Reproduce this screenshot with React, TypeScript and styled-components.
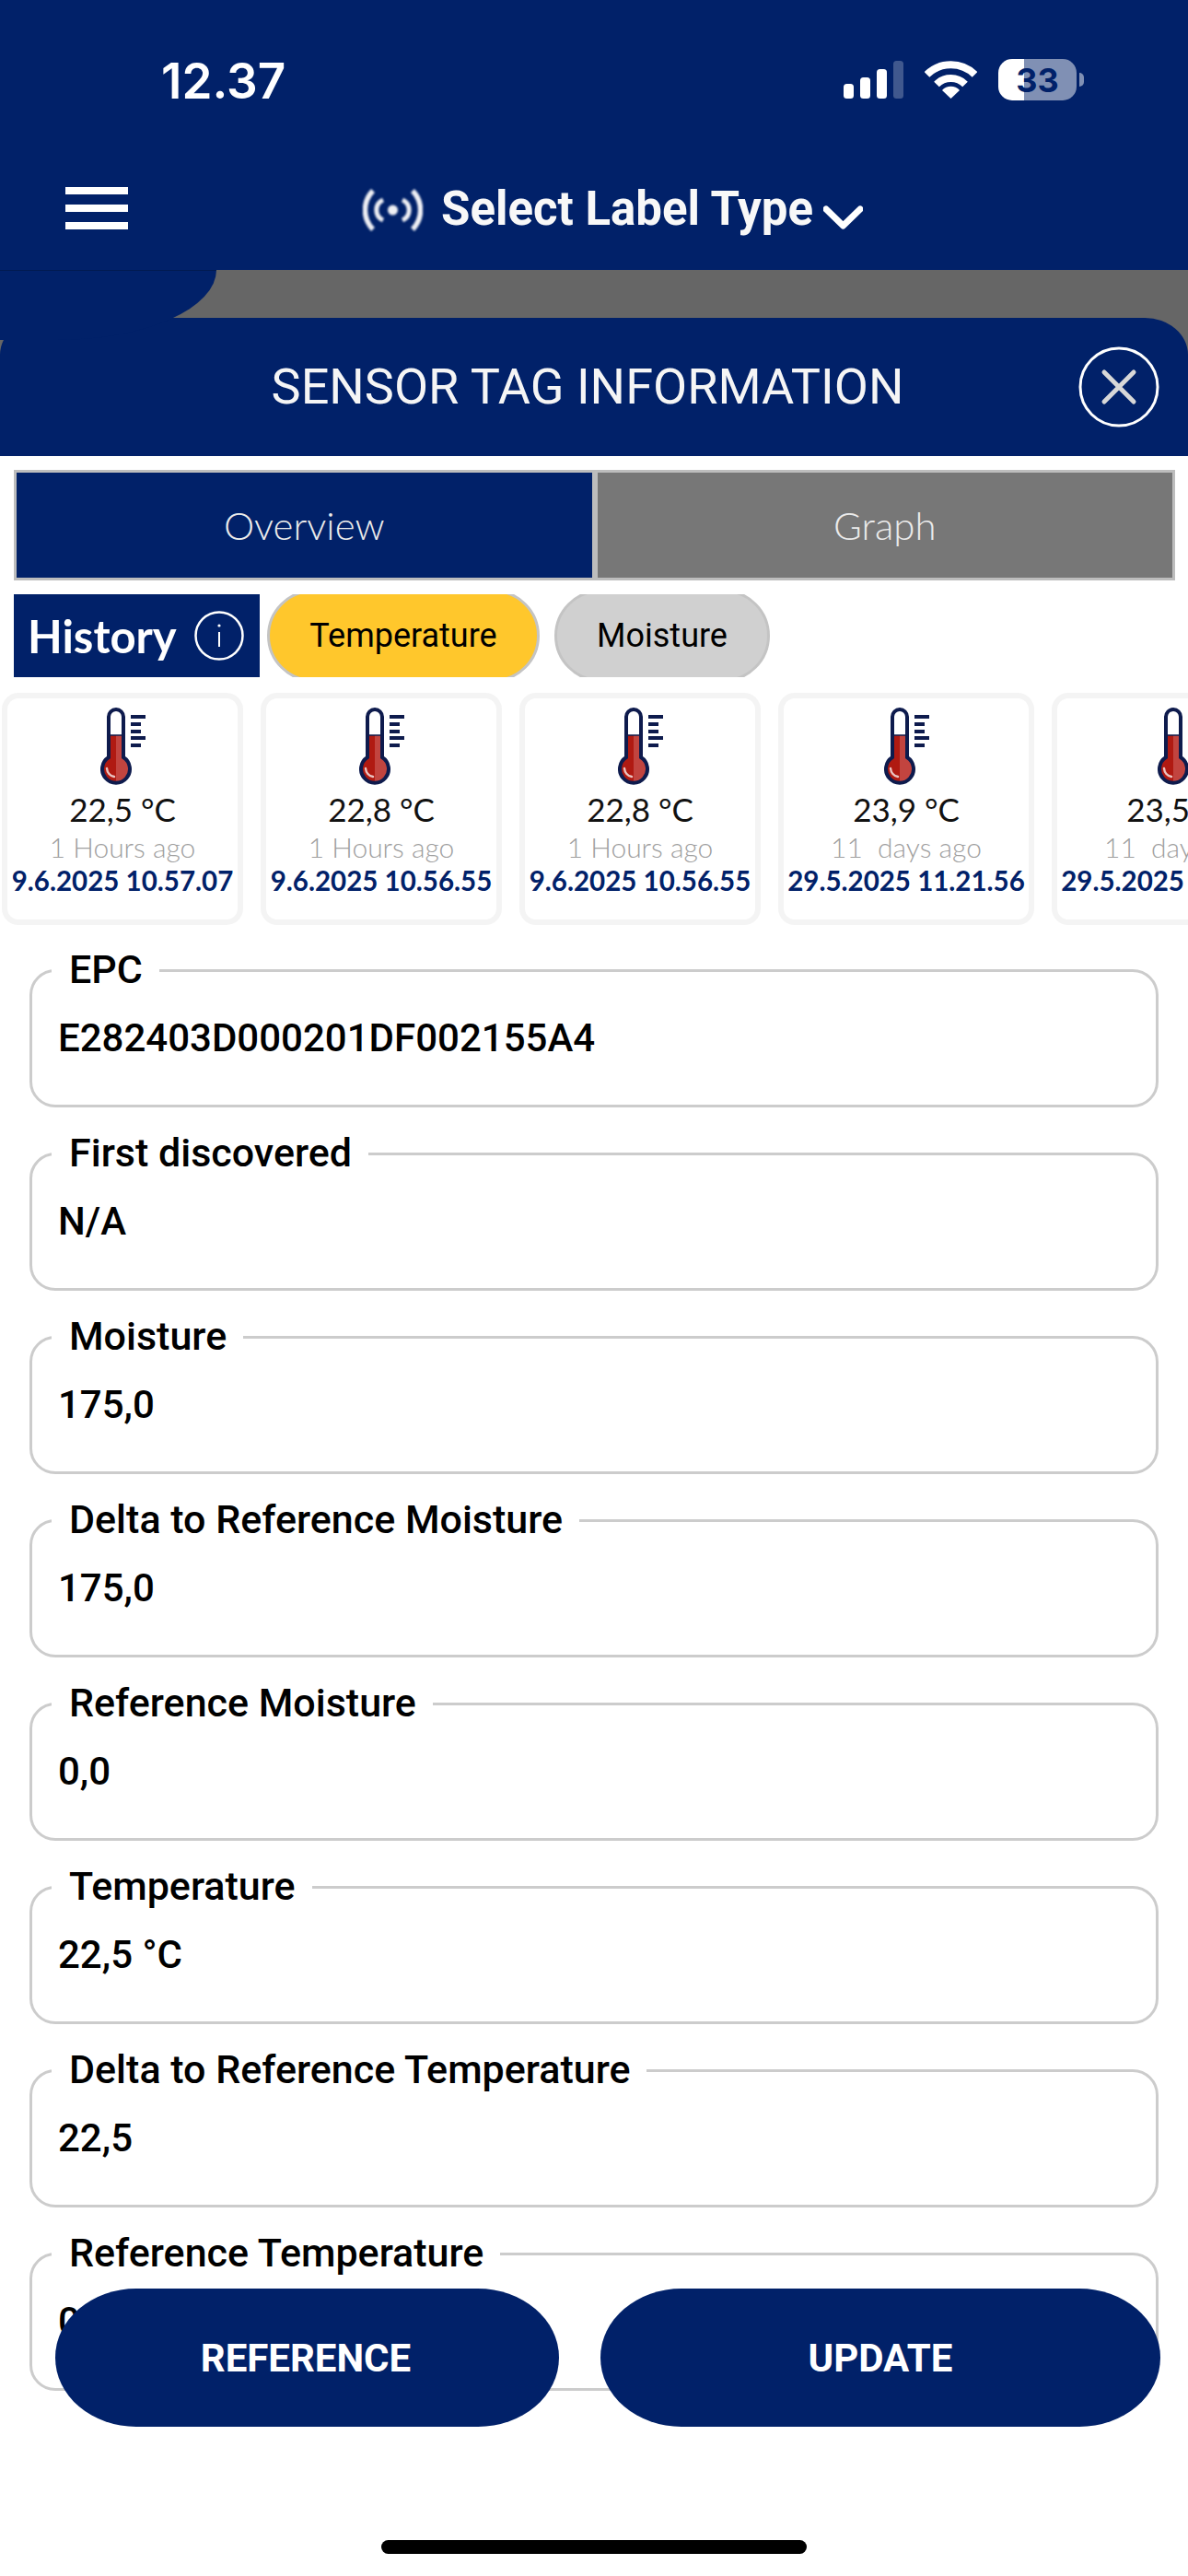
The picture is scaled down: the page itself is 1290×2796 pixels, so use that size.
import React from "react";
import styled, { createGlobalStyle } from "styled-components";

const NAVY = "#012169";

const Global = createGlobalStyle`
  html, body { margin: 0; padding: 0; background: #fff; }
  * { box-sizing: border-box; }
`;

const Page = styled.div`
  position: relative;
  width: 1290px;
  height: 2796px;
  overflow: hidden;
  background: #fff;
  display: flex;
  flex-direction: column;
  font-family: Roboto, "Liberation Sans", sans-serif;
`;

const TopBar = styled.header`
  height: 293px;
  background: ${NAVY};
  display: flex;
  flex-direction: column;
`;

const StatusRow = styled.div`
  height: 176px;
  padding: 62px 0 0 175px;
  display: flex;
  align-items: flex-start;
`;

const Clock = styled.div`
  font-family: Inter, sans-serif;
  font-weight: 600;
  font-size: 53px;
  line-height: 52px;
  color: #fff;
  width: 741px;
`;

const StatusIcons = styled.div`
  display: flex;
  align-items: flex-start;
`;

const SignalIcon = styled.svg`
  width: 65px;
  height: 41px;
  margin-top: 4px;
`;

const WifiIcon = styled.svg`
  width: 57px;
  height: 42px;
  margin: 3px 0 0 23px;
`;

const Battery = styled.div`
  position: relative;
  width: 85px;
  height: 45px;
  margin: 2px 0 0 23px;
  border-radius: 15px;
  background: linear-gradient(to right, #fff 28px, rgba(255, 255, 255, 0.5) 28px);
  display: flex;
  align-items: center;
  justify-content: center;
  font-family: Inter, sans-serif;
  font-weight: 700;
  font-size: 36px;
  color: ${NAVY};
  &::after {
    content: "";
    position: absolute;
    right: -8px;
    top: 15px;
    width: 5px;
    height: 15px;
    border-radius: 0 5px 5px 0;
    background: rgba(255, 255, 255, 0.5);
  }
`;

const NavRow = styled.nav`
  flex: 1;
  position: relative;
  display: flex;
  align-items: flex-start;
  padding-left: 71px;
`;

const Burger = styled.div`
  width: 68px;
  height: 46px;
  margin: 27px 255px 0 0;
  display: flex;
  flex-direction: column;
  justify-content: space-between;
  span {
    display: block;
    height: 8px;
    background: #fff;
  }
`;

const RadioIcon = styled.svg`
  width: 65px;
  height: 46px;
  margin-top: 29px;
  filter: blur(0.8px);
`;

const NavTitle = styled.div`
  font-weight: 700;
  font-size: 51px;
  line-height: 60px;
  color: #f8f8f8;
  margin: 21px 0 0 20px;
`;

const Chevron = styled.svg`
  width: 43px;
  height: 26px;
  margin: 47px 0 0 11px;
`;

const Backdrop = styled.div`
  position: relative;
  background: #666666;
  padding-top: 52px;
`;

const Blob = styled.div`
  position: absolute;
  left: 0;
  top: 0;
  width: 235px;
  height: 76px;
  background: ${NAVY};
  border-top: 1px solid #011a50;
  border-bottom-right-radius: 173px 76px;
`;

const ModalHeader = styled.div`
  position: relative;
  height: 150px;
  background: ${NAVY};
  border-radius: 47px 47px 0 0 / 40px 40px 0 0;
  display: flex;
  align-items: center;
  justify-content: center;
`;

const ModalTitle = styled.h1`
  margin: 0 0 2px -14px;
  font-weight: 400;
  font-size: 54px;
  color: #f5f5f5;
`;

const CloseCircle = styled.svg`
  position: absolute;
  right: 31px;
  top: 31px;
  width: 88px;
  height: 88px;
`;

const Tabs = styled.div`
  margin: 15px 14px 0 15px;
  height: 120px;
  display: flex;
  gap: 6px;
  background: #bdbdbd;
  padding: 3px;
`;

const Tab = styled.div<{ $active?: boolean }>`
  flex: 1;
  background: ${(p) => (p.$active ? NAVY : "#777777")};
  color: #ebebeb;
  font-family: Lato, sans-serif;
  font-weight: 300;
  font-size: 42px;
  display: flex;
  align-items: center;
  justify-content: center;
`;

const HistoryRow = styled.div`
  margin: 15px 0 0 15px;
  height: 90px;
  display: flex;
  align-items: stretch;
`;

const HistoryBox = styled.div`
  width: 267px;
  background: ${NAVY};
  color: #fff;
  font-family: Lato, sans-serif;
  font-weight: 700;
  font-size: 49px;
  display: flex;
  align-items: center;
  padding-left: 15px;
  gap: 19px;
`;

const InfoIcon = styled.svg`
  width: 54px;
  height: 54px;
`;

const PillSlot = styled.div<{ $w: number; $ml: number }>`
  width: ${(p) => p.$w}px;
  margin-left: ${(p) => p.$ml}px;
  height: 90px;
  overflow: hidden;
  display: flex;
  align-items: center;
`;

const Pill = styled.div<{ $active?: boolean }>`
  width: 100%;
  height: 100px;
  flex: none;
  border: 3px solid #c4c4c4;
  border-radius: 50px;
  background: ${(p) => (p.$active ? "#ffc72c" : "#d0d0d0")};
  color: #000;
  font-size: 36px;
  display: flex;
  align-items: center;
  justify-content: center;
`;

const CardRow = styled.div`
  margin-top: 17px;
  padding-left: 2px;
  display: flex;
  gap: 19px;
  overflow: hidden;
`;

const Card = styled.div<{ $w: number }>`
  flex: none;
  width: ${(p) => p.$w}px;
  height: 252px;
  background: #fff;
  border: 6px solid #f4f4f4;
  border-radius: 18px;
  padding-top: 10px;
  display: flex;
  flex-direction: column;
  align-items: center;
  font-family: Lato, sans-serif;
  white-space: pre;
`;

const Thermo = styled.svg`
  width: 49px;
  height: 84px;
  flex: none;
  margin-left: 1px;
`;

const CardTemp = styled.div`
  margin-top: 4px;
  font-size: 35px;
  line-height: 44px;
  color: #111;
`;

const CardAgo = styled.div`
  margin-top: 1px;
  font-weight: 300;
  font-size: 30px;
  line-height: 37px;
  color: #9f9f9f;
`;

const CardDate = styled.div`
  font-weight: 700;
  font-size: 29.5px;
  line-height: 35px;
  color: ${NAVY};
`;

const FieldList = styled.div`
  margin-top: 25px;
  padding: 0 32px;
  display: flex;
  flex-direction: column;
  gap: 26px;
`;

const Field = styled.fieldset`
  margin: 0;
  height: 173px;
  padding: 0 0 0 28px;
  border: 3px solid #cccccc;
  border-radius: 28px;
  min-width: 0;
`;

const FieldLabel = styled.legend`
  margin-left: -7px;
  padding: 0 18px 2px 19px;
  font-weight: 500;
  font-size: 43px;
  line-height: 46px;
  color: #000;
`;

const FieldValue = styled.div`
  margin-top: 26px;
  font-weight: 500;
  font-size: 42px;
  line-height: 48px;
  color: #000;
`;

const ActionBar = styled.div`
  position: absolute;
  left: 60px;
  top: 2484px;
  width: 1200px;
  display: flex;
  gap: 45px;
`;

const ActionButton = styled.div<{ $w: number; $shift: number }>`
  width: ${(p) => p.$w}px;
  height: 150px;
  border-radius: 88px / 75px;
  background: ${NAVY};
  color: #fff;
  font-weight: 700;
  font-size: 42px;
  padding-right: ${(p) => p.$shift}px;
  display: flex;
  align-items: center;
  justify-content: center;
`;

const HomeBar = styled.div`
  position: absolute;
  left: 414px;
  top: 2757px;
  width: 462px;
  height: 15px;
  border-radius: 8px;
  background: #000;
`;

const ThermoIcon = () => (
  <Thermo viewBox="0 0 49 84">
    <path d="M9 30H25V54A15 15 0 1 1 9 54Z" fill="#c2443f" />
    <path d="M9 30H17V81A15 15 0 0 1 9 54Z" fill="#b01a12" />
    <path d="M9 30H25" stroke="#0e1b4d" strokeWidth="1.5" />
    <path
      d="M9 54V10A8 8 0 0 1 25 10V54A15 15 0 1 1 9 54Z"
      fill="none"
      stroke="#0e1b4d"
      strokeWidth="4"
    />
    <path d="M7 66A10 10 0 0 0 15 75" fill="none" stroke="#eac4c2" strokeWidth="2.5" strokeLinecap="round" />
    <path d="M33 10H49M33 18H44M33 26H44M33 33H49M33 41H44" stroke="#0e1b4d" strokeWidth="4" />
  </Thermo>
);

const cards = [
  { w: 262, temp: "22,5 °C", ago: "1 Hours ago", date: "9.6.2025 10.57.07" },
  { w: 262, temp: "22,8 °C", ago: "1 Hours ago", date: "9.6.2025 10.56.55" },
  { w: 262, temp: "22,8 °C", ago: "1 Hours ago", date: "9.6.2025 10.56.55" },
  { w: 278, temp: "23,9 °C", ago: "11  days ago", date: "29.5.2025 11.21.56" },
  { w: 278, temp: "23,5 °C", ago: "11  days ago", date: "29.5.2025 11.21.56" },
];

const fields = [
  ["EPC", "E282403D000201DF002155A4"],
  ["First discovered", "N/A"],
  ["Moisture", "175,0"],
  ["Delta to Reference Moisture", "175,0"],
  ["Reference Moisture", "0,0"],
  ["Temperature", "22,5 °C"],
  ["Delta to Reference Temperature", "22,5"],
  ["Reference Temperature", "0,0"],
];

export default function App() {
  return (
    <Page>
      <Global />
      <TopBar>
        <StatusRow>
          <Clock>12.37</Clock>
          <StatusIcons>
            <SignalIcon viewBox="0 0 65 41">
              <rect x="0" y="25" width="11" height="16" rx="3.5" fill="#fff" />
              <rect x="18" y="18" width="11" height="23" rx="3.5" fill="#fff" />
              <rect x="36" y="9" width="11" height="32" rx="3.5" fill="#fff" />
              <rect x="54" y="0" width="11" height="41" rx="3.5" fill="#fff" opacity="0.25" />
            </SignalIcon>
            <WifiIcon viewBox="0 0 57 42">
              <path d="M2.5 16A37 37 0 0 1 54.5 16" fill="none" stroke="#fff" strokeWidth="8" />
              <path d="M13 26.5A22 22 0 0 1 44 26.5" fill="none" stroke="#fff" strokeWidth="8" />
              <path d="M28.5 42L19 33A13 13 0 0 1 38 33Z" fill="#fff" />
            </WifiIcon>
            <Battery>33</Battery>
          </StatusIcons>
        </StatusRow>
        <NavRow>
          <Burger>
            <span />
            <span />
            <span />
          </Burger>
          <RadioIcon viewBox="0 0 65 46">
            <circle cx="32.5" cy="23" r="5.5" fill="#eeeff4" />
            <path d="M22 12A12 12 0 0 0 22 34M43 12A12 12 0 0 1 43 34" fill="none" stroke="#eeeff4" strokeWidth="5" />
            <path d="M11 2A30 30 0 0 0 11 44M54 2A30 30 0 0 1 54 44" fill="none" stroke="#eeeff4" strokeWidth="5.5" />
          </RadioIcon>
          <NavTitle>Select Label Type</NavTitle>
          <Chevron viewBox="0 0 43 26">
            <path d="M3 4L21.5 22L40 4" fill="none" stroke="#fff" strokeWidth="7" strokeLinecap="round" strokeLinejoin="round" />
          </Chevron>
        </NavRow>
      </TopBar>

      <Backdrop>
        <ModalHeader>
          <ModalTitle>SENSOR TAG INFORMATION</ModalTitle>
          <CloseCircle viewBox="0 0 88 88">
            <circle cx="44" cy="44" r="42" fill="none" stroke="#fff" strokeWidth="3" />
            <path d="M28 28L60 60M60 28L28 60" stroke="#d8d8d8" strokeWidth="5" strokeLinecap="round" />
          </CloseCircle>
        </ModalHeader>
        <Blob />
      </Backdrop>

      <Tabs>
        <Tab $active>Overview</Tab>
        <Tab>Graph</Tab>
      </Tabs>

      <HistoryRow>
        <HistoryBox>
          History
          <InfoIcon viewBox="0 0 54 54">
            <circle cx="27" cy="27" r="25.5" fill="none" stroke="#fff" strokeWidth="2.5" />
            <path d="M27 23V39" stroke="#fff" strokeWidth="2" />
            <circle cx="27" cy="16" r="1.6" fill="#fff" />
          </InfoIcon>
        </HistoryBox>
        <PillSlot $w={296} $ml={8}>
          <Pill $active>Temperature</Pill>
        </PillSlot>
        <PillSlot $w={234} $ml={16}>
          <Pill>Moisture</Pill>
        </PillSlot>
      </HistoryRow>

      <CardRow>
        {cards.map((c, i) => (
          <Card key={i} $w={c.w}>
            <ThermoIcon />
            <CardTemp>{c.temp}</CardTemp>
            <CardAgo>{c.ago}</CardAgo>
            <CardDate>{c.date}</CardDate>
          </Card>
        ))}
      </CardRow>

      <FieldList>
        {fields.map((f) => (
          <Field key={f[0]}>
            <FieldLabel>{f[0]}</FieldLabel>
            <FieldValue>{f[1]}</FieldValue>
          </Field>
        ))}
      </FieldList>

      <ActionBar>
        <ActionButton $w={547} $shift={3}>REFERENCE</ActionButton>
        <ActionButton $w={608} $shift={0}>UPDATE</ActionButton>
      </ActionBar>
      <HomeBar />
    </Page>
  );
}
